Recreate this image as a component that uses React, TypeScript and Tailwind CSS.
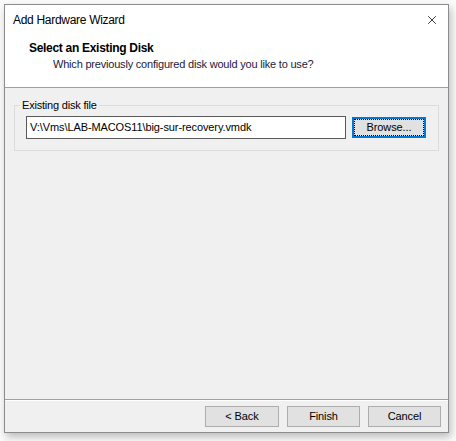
import { X } from 'lucide-react'

const font = { fontFamily: '"Liberation Sans", Arial, sans-serif' }

function Btn({ label, focused = false, w }: { label: string; focused?: boolean; w: string }) {
  return (
    <button
      className={`flex h-[21px] items-center justify-center bg-[#e1e1e1] text-[11px] tracking-[-0.1px] text-black ${w} ${
        focused ? 'border-2 border-[#0078d7]' : 'border border-[#adadad]'
      }`}
    >
      {focused ? (
        <span className="flex h-full w-full items-center justify-center border border-dotted border-black">
          {label}
        </span>
      ) : (
        label
      )}
    </button>
  )
}

export default function App() {
  return (
    <div className="h-[441px] w-[456px] overflow-hidden bg-[#fbfbfb] pl-[4px] pt-[4px]" style={font}>
      <div className="flex h-[429px] w-[445px] flex-col border border-[#8c8c8c] bg-[#f0f0f0] shadow-[2px_4px_8px_rgba(0,0,0,0.25)]">
        {/* title bar + header */}
        <div className="flex h-[83px] flex-col border-b border-[#a0a0a0] bg-white">
          <div className="flex h-[30px] items-center justify-between pl-[8px] pr-[9px]">
            <span className="text-[12px] tracking-[-0.3px] text-black">Add Hardware Wizard</span>
            <X className="h-[14px] w-[14px] text-black" strokeWidth={1.3} />
          </div>
          <div className="pl-[24px] pt-[5px]">
            <div className="text-[12px] font-bold leading-[16px] tracking-[-0.3px] text-black">Select an Existing Disk</div>
            <div className="pl-[24px] text-[11px] leading-[16px] tracking-[-0.2px] text-[#1a1a40]">
              Which previously configured disk would you like to use?
            </div>
          </div>
        </div>

        {/* body */}
        <div className="flex-1 px-[9px] pt-[10px]">
          <fieldset className="h-[53px] border border-[#dcdcdc] px-0">
            <legend className="ml-[5px] px-[2px] text-[11px] leading-[14px] tracking-[-0.2px] text-black">
              Existing disk file
            </legend>
            <div className="mt-[4px] flex items-center gap-[6px] pl-[11px]">
              <div className="flex h-[23px] w-[320px] items-center border border-[#5a5a5a] bg-white px-[3px] text-[11px] tracking-[-0.1px] text-black">
                V:\Vms\LAB-MACOS11\big-sur-recovery.vmdk
              </div>
              <Btn label="Browse..." focused w="w-[74px]" />
            </div>
          </fieldset>
        </div>

        {/* footer */}
        <div className="h-[33px] border-t border-[#a0a0a0]">
          <div className="flex h-full items-start justify-end gap-[8px] border-t border-white pr-[7px] pt-[5px]">
            <Btn label="< Back" w="w-[74px]" />
            <Btn label="Finish" w="w-[73px]" />
            <Btn label="Cancel" w="w-[73px]" />
          </div>
        </div>
      </div>
    </div>
  )
}
